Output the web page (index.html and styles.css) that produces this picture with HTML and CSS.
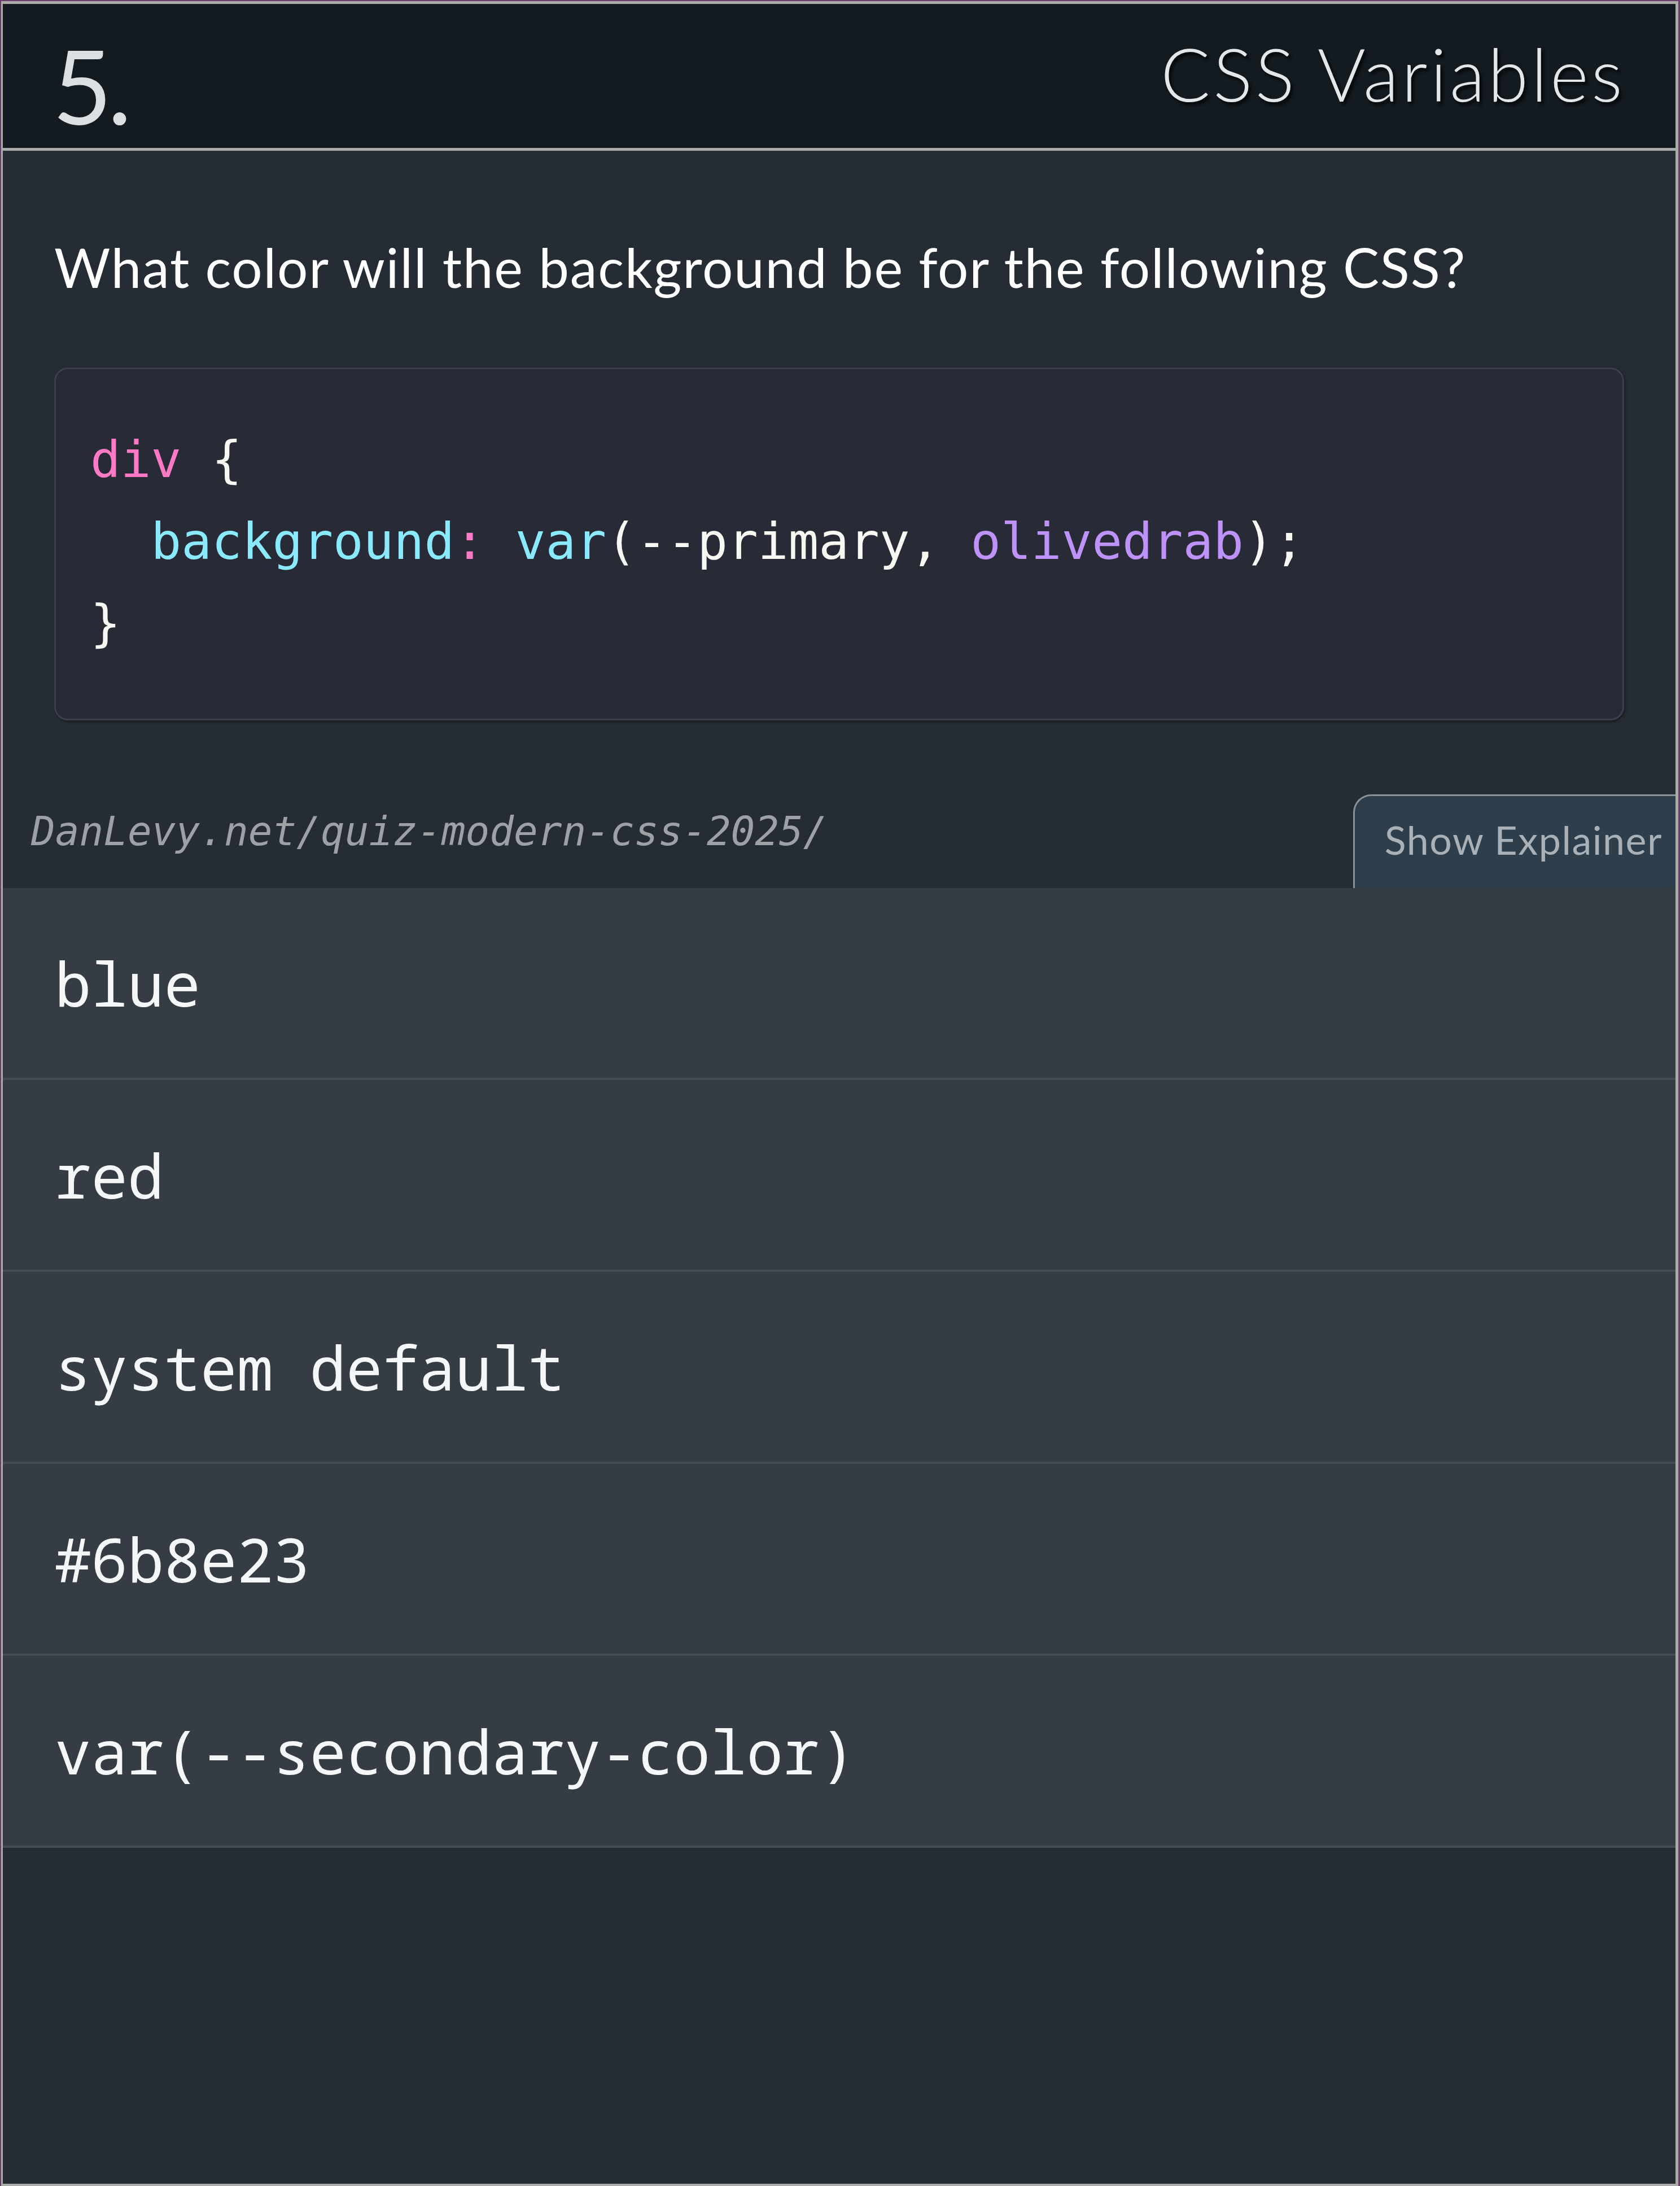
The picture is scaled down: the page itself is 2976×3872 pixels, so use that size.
FILE: index.html
```html
<!DOCTYPE html>
<html lang="en">
<head>
<meta charset="utf-8">
<title>CSS Variables quiz</title>
<link rel="stylesheet" href="styles.css">
</head>
<body>
  <main class="card">
    <header class="card-header">
      <span class="q-num">5.</span>
      <h1 class="q-title">CSS Variables</h1>
    </header>
    <section class="q-body">
      <p class="q-text">What color will the background be for the following CSS?</p>
      <pre class="code"><code><span class="line"><span class="tok-sel">div</span> {</span>
<span class="line">  <span class="tok-prop">background</span><span class="tok-sel">:</span> <span class="tok-fn">var</span>(--primary, <span class="tok-const">olivedrab</span>);</span>
<span class="line">}</span></code></pre>
    </section>
    <div class="meta-row">
      <span class="source">DanLevy.net/quiz-modern-css-2025/</span>
      <button class="explain-btn" type="button">Show Explainer</button>
    </div>
    <ul class="options">
      <li class="option">blue</li>
      <li class="option">red</li>
      <li class="option">system default</li>
      <li class="option">#6b8e23</li>
      <li class="option">var(--secondary-color)</li>
    </ul>
    <div class="filler"></div>
  </main>
</body>
</html>
```
FILE: styles.css
```css
html, body {
  margin: 0;
  padding: 0;
}

body {
  background: #6b3d6a;
  padding: 2px 3px 0 2px;
  font-family: Lato, "Open Sans", "Liberation Sans", sans-serif;
}

.card {
  box-sizing: border-box;
  height: 3870px;
  border: 5px solid #ababab;
  border-left-width: 3px;
  border-bottom-width: 4px;
  background: #262c33;
  display: flex;
  flex-direction: column;
  overflow: hidden;
}

.card-header {
  flex: none;
  height: 255px;
  background: #131a20;
  border-bottom: 5px solid #ababab;
  display: flex;
  justify-content: space-between;
  align-items: flex-start;
  padding: 0 89px 0 88px;
  color: #dcdfe2;
}

.q-num {
  font-size: 182px;
  font-weight: 400;
  line-height: 1;
  margin-top: 53px;
  letter-spacing: -8px;
}

.q-title {
  margin: 58px 0 0 0;
  font-size: 130px;
  font-weight: 300;
  line-height: 1;
  letter-spacing: 5px;
  color: #e4e6e8;
  text-shadow: 4px 5px 5px rgba(0, 0, 0, 0.75);
}

.q-body {
  flex: none;
  padding: 0 91px;
}

.q-text {
  margin: 148px 0 0 0;
  font-size: 96px;
  font-weight: 400;
  line-height: 1.2;
  letter-spacing: 1.8px;
  color: #ffffff;
}

.code {
  margin: 121px 0 0 0;
  box-sizing: border-box;
  height: 625px;
  background: #282a36;
  border: 3px solid #3b3e4f;
  border-radius: 24px;
  box-shadow: 2px 3px 4px rgba(0, 0, 0, 0.35);
  padding: 88px 58px 0 61px;
  font-family: "DejaVu Sans Mono", "Liberation Mono", monospace;
  font-size: 89.3px;
  line-height: 145px;
  color: #f8f8f2;
  white-space: pre;
}

.tok-sel { color: #ff79c6; }
.tok-prop { color: #8be9fd; }
.tok-fn { color: #8be9fd; }
.tok-const { color: #bd93f9; }

.meta-row {
  flex: none;
  margin-top: 131px;
  display: flex;
  justify-content: space-between;
  align-items: flex-end;
  padding-left: 50px;
}

.source {
  margin-bottom: 58px;
  font-family: "DejaVu Sans Mono", "Liberation Mono", monospace;
  font-style: italic;
  font-size: 71px;
  line-height: 1.2;
  color: #9da1a6;
}

.explain-btn {
  box-sizing: border-box;
  height: 166px;
  margin: 0;
  padding: 35px 23px 0 53px;
  background: #2e3e4b;
  border: 3px solid #8a9197;
  border-right: none;
  border-bottom: none;
  border-radius: 32px 0 0 0;
  font-family: Lato, "Open Sans", sans-serif;
  font-size: 70px;
  font-weight: 400;
  line-height: 84px;
  letter-spacing: 1.5px;
  color: #a9b0b6;
  text-align: left;
  display: flex;
  align-items: flex-start;
}

.options {
  flex: none;
  list-style: none;
  margin: 0;
  padding: 0;
}

.option {
  box-sizing: border-box;
  height: 340px;
  background: #363c44;
  border-bottom: 4px solid #444b53;
  display: flex;
  align-items: center;
  padding-left: 92px;
  font-family: "Noto Sans Mono", "DejaVu Sans Mono", monospace;
  font-size: 107.5px;
  line-height: 1.2;
  color: #f5f6f7;
}

.filler {
  flex: 1;
}
```
